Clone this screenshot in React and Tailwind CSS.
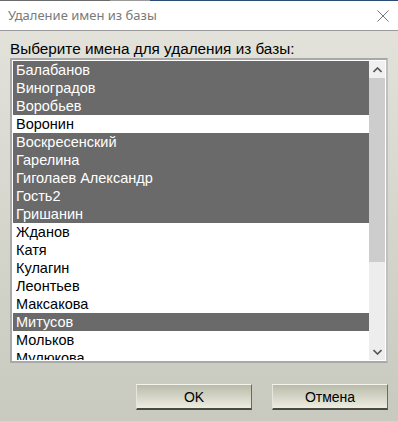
const names = [
  { n: 'Балабанов', s: true },
  { n: 'Виноградов', s: true },
  { n: 'Воробьев', s: true },
  { n: 'Воронин', s: false },
  { n: 'Воскресенский', s: true },
  { n: 'Гарелина', s: true },
  { n: 'Гиголаев Александр', s: true },
  { n: 'Гость2', s: true },
  { n: 'Гришанин', s: true },
  { n: 'Жданов', s: false },
  { n: 'Катя', s: false },
  { n: 'Кулагин', s: false },
  { n: 'Леонтьев', s: false },
  { n: 'Максакова', s: false },
  { n: 'Митусов', s: true },
  { n: 'Мольков', s: false },
  { n: 'Мулюкова', s: false },
];

const Button = ({ children }) => (
  <button
    type="button"
    className="w-[116px] h-[26px] border-t border-l border-t-[#f4f4ec] border-l-[#e6e6dc] border-b-2 border-r border-b-[#4a4a40] border-r-[#6a6a60] bg-gradient-to-b from-[#b9bcaa] to-[#eeede2] text-[14px] text-black leading-none"
  >
    {children}
  </button>
);

export default function App() {
  return (
    <div
      className="w-[398px] h-[421px] flex flex-col overflow-hidden"
      style={{ fontFamily: '"Liberation Sans", Arial, sans-serif' }}
    >
      <div className="h-px flex shrink-0">
        <div className="w-[110px] bg-[#6b6b6b]" />
        <div className="w-[40px] bg-[#9a9a9a]" />
        <div className="flex-1 bg-[#2c4d73]" />
      </div>
      {/* title bar */}
      <div className="h-[30px] shrink-0 bg-white border-b border-[#9a9a9a] flex items-center justify-between pl-[8px] pr-[9px]">
        <span className="text-[13px] text-[#7a7a7a]" style={{ fontFamily: '"Noto Sans", "Open Sans", sans-serif' }}>
          Удаление имен из базы
        </span>
        <svg width="12" height="12" viewBox="0 0 12 12" className="text-[#777]">
          <path d="M0.5 0.5 L11.5 11.5 M11.5 0.5 L0.5 11.5" stroke="currentColor" strokeWidth="1" fill="none" />
        </svg>
      </div>
      {/* body */}
      <div className="flex-1 bg-gradient-to-b from-[#e2e2da] to-[#c8c9bf] flex flex-col px-[10px]">
        <div className="pt-[10px] h-[27px] text-[15.3px] text-black leading-[16px] whitespace-nowrap">
          Выберите имена для удаления из базы:
        </div>
        <div className="w-[378px] h-[305px] border-2 border-[#a8a8a8] border-r-[#c0c0c0] bg-white p-px flex">
          <div className="flex-1 overflow-hidden">
            {names.map((it) => (
              <div
                key={it.n}
                className={`h-[18px] pl-[3px] text-[14.5px] leading-[18px] whitespace-nowrap ${
                  it.s ? 'bg-[#6a6a6a] text-white' : 'text-black'
                }`}
              >
                {it.n}
              </div>
            ))}
          </div>
          <div className="w-[16px] bg-[#ededed] flex flex-col">
            <div className="h-[17px] bg-[#f0f0f0] flex items-center justify-center">
              <svg width="9" height="6" viewBox="0 0 9 6">
                <path d="M0.5 5 L4.5 1 L8.5 5" stroke="#555" strokeWidth="1.6" fill="none" />
              </svg>
            </div>
            <div className="h-[184px] bg-[#cdcdcd]" />
            <div className="flex-1" />
            <div className="h-[17px] flex items-center justify-center">
              <svg width="9" height="6" viewBox="0 0 9 6">
                <path d="M0.5 1 L4.5 5 L8.5 1" stroke="#555" strokeWidth="1.6" fill="none" />
              </svg>
            </div>
          </div>
        </div>
        <div className="flex justify-end gap-[20px] pt-[21px]">
          <Button>OK</Button>
          <Button>Отмена</Button>
        </div>
      </div>
    </div>
  );
}
